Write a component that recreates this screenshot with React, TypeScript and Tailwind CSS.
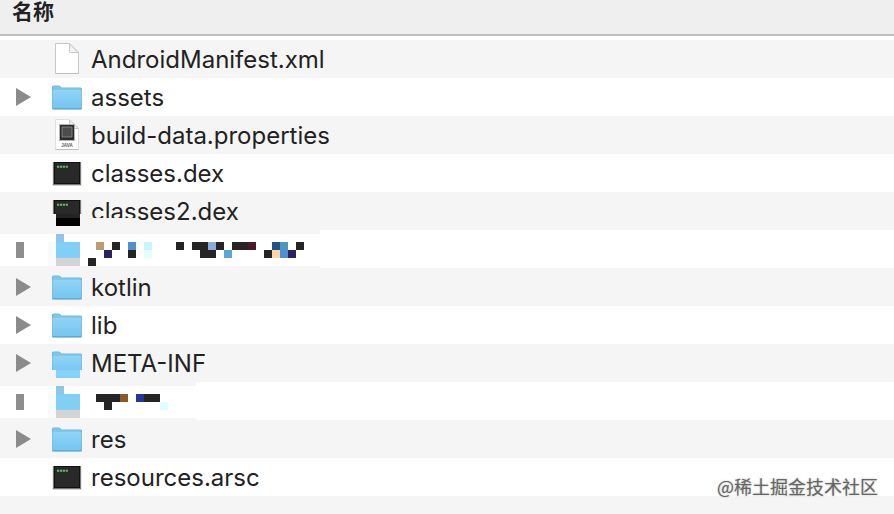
import React from 'react';

type Kind = 'file' | 'folder' | 'java' | 'exec' | 'execCut' | 'folderCut' | 'hidden';

type Entry = { name: string; kind: Kind; cells?: [number, number, number, string][]; patch?: number };

// cells are x, y, width, color on the 8px mosaic grid
const entries: Entry[] = [
  { name: 'AndroidManifest.xml', kind: 'file' },
  { name: 'assets', kind: 'folder' },
  { name: 'build-data.properties', kind: 'java' },
  { name: 'classes.dex', kind: 'exec' },
  { name: 'classes2.dex', kind: 'execCut' },
  {
    name: 'hidden-1',
    kind: 'hidden',
    patch: 320,
    cells: [
      [96, 12, 8, '#bd9c72'], [112, 12, 8, '#252525'], [128, 12, 8, '#4c90d6'], [144, 12, 8, '#c6f4ff'],
      [176, 12, 8, '#252525'], [192, 12, 16, '#252525'], [208, 12, 8, '#8aaddb'], [216, 12, 8, '#252525'],
      [232, 12, 16, '#252525'], [248, 12, 8, '#4b1b2b'], [272, 12, 8, '#235289'], [280, 12, 8, '#4d95bd'],
      [296, 12, 8, '#252525'], [104, 20, 8, '#292461'], [128, 20, 8, '#252525'], [144, 20, 8, '#e4fdff'],
      [200, 20, 16, '#252525'], [224, 20, 8, '#5aa5da'], [264, 20, 8, '#252525'], [272, 20, 8, '#fbd6a2'],
      [280, 20, 8, '#4c90d6'], [288, 20, 8, '#292461'], [88, 28, 8, '#252525'],
    ],
  },
  { name: 'kotlin', kind: 'folder' },
  { name: 'lib', kind: 'folder' },
  { name: 'META-INF', kind: 'folderCut' },
  {
    name: 'hidden-2',
    kind: 'hidden',
    patch: 196,
    cells: [
      [96, 12, 24, '#252525'], [120, 12, 8, '#8c5a28'], [136, 12, 8, '#22379a'], [144, 12, 16, '#252525'],
      [104, 20, 8, '#252525'], [160, 20, 8, '#dcffff'],
    ],
  },
  { name: 'res', kind: 'folder' },
  { name: 'resources.arsc', kind: 'exec' },
];

const FolderIcon = ({ cut }: { cut?: boolean }) => (
  <svg className="block h-[38px] w-9" viewBox="0 0 36 38">
    <defs>
      <linearGradient id="folder" x1="0" y1="0" x2="0" y2="1">
        <stop offset="0" stopColor="#8fd3f6" />
        <stop offset="1" stopColor="#76c5f0" />
      </linearGradient>
    </defs>
    <path d="M4 30V9q0-1.500 1.500-1.500h5q1 0 1.700.8l1.300 1.200h19q1.500 0 1.500 1.500V30q0 1.500-1.500 1.500h-27Q4 31.500 4 30z" fill="#6fb4dc" />
    <path d="M5 12V9q0-.8.8-.8h4.500q.8 0 1.300.6l1.300 1.500H32q1 0 1 1V12z" fill="#7fc6ec" />
    <path d="M4.500 12.500h29V29q0 1.300-1.300 1.300H5.800q-1.300 0-1.300-1.300z" fill="url(#folder)" />
    <path d="M5 12.500h28" stroke="#93d3f4" />
    <path d="M4.500 30.800h29" stroke="#5fa3ca" />
    {cut && (
      <>
        <path d="M0 26h36v8H0z" fill="#f2f4f5" />
        <path d="M8 26h24v8H8z" fill="#84d2fb" />
      </>
    )}
  </svg>
);

const PageIcon = ({ java }: { java?: boolean }) => (
  <svg className="block h-[38px] w-9" viewBox="0 0 36 38">
    <path d="M7.500 3.500h14l9 8.500V33.500h-23z" fill="#fff" stroke={java ? '#e0e0e0' : '#c8c8c8'} />
    <path d="M21.500 4v8.500h8.500z" fill="#f4f4f4" stroke="#cacaca" />
    <path d="M7.500 33.500h23" stroke="#bdbdbd" />
    {java && (
      <>
        <path d="M11 8h16v17H11z" fill="#b5b5b5" />
        <path d="M12 9h14v15H12z" fill="#2c2c2c" />
        <path d="M14 11h10v10H14z" fill="#4d4d4d" stroke="#999" strokeWidth=".7" />
        <text x="19" y="31" textAnchor="middle" fontSize="4.500" fontWeight="700" fontFamily="Liberation Sans, sans-serif" fill="#555">
          JAVA
        </text>
      </>
    )}
  </svg>
);

const ExecIcon = ({ cut }: { cut?: boolean }) => (
  <svg className="block h-[38px] w-9" viewBox="0 0 36 38">
    <path d="M4.500 8h29v24h-29z" fill="#d2d2d2" />
    <path d="M5 8h28v23H5z" fill="#777" />
    <path d="M6 8h26v22H6z" fill="#111" />
    <path d="M7 9h24v20H7z" fill="#292929" />
    <path d="M9 12.800h11" stroke="#63b95c" strokeWidth="2" strokeDasharray="2.200 .7" />
    {cut && (
      <>
        <path d="M0 22h36v16H0z" fill="#f5f5f5" />
        <path d="M8 22h24v4H8z" fill="#242424" />
        <path d="M8 26h24v8H8z" fill="#000" />
      </>
    )}
  </svg>
);

const Icon = ({ kind }: { kind: Kind }) => {
  if (kind === 'file') return <PageIcon />;
  if (kind === 'java') return <PageIcon java />;
  if (kind === 'exec') return <ExecIcon />;
  if (kind === 'execCut') return <ExecIcon cut />;
  return <FolderIcon cut={kind === 'folderCut'} />;
};

const Mosaic = ({ cells = [], patch = 0 }: { cells?: Entry['cells']; patch?: number }) => (
  <svg className="block h-[38px] w-[324px]" viewBox="0 0 324 38" shapeRendering="crispEdges">
    <path d={`M0 0h${patch}v4H0zM0 36h${patch}v2H0z`} fill="#f5f5f5" />
    <path d="M16 12h8v16h-8z" fill="#8e8e8e" />
    <path d="M48 12h8v24h-8z" fill="#f9fafb" />
    <path d="M56 4h8v8h-8z" fill="#8fc5e8" />
    <path d="M56 12h24v16H56z" fill="#82cff5" />
    <path d="M56 28h24v8H56z" fill="#d4d4d4" />
    {cells.map(([x, y, w, color]) => (
      <rect key={`${x}-${y}`} x={x} y={y} width={w} height="8" fill={color} />
    ))}
  </svg>
);

const Row = ({ entry }: { entry: Entry }) => {
  const { name, kind, cells, patch } = entry;
  const isFolder = kind === 'folder' || kind === 'folderCut';

  return (
    <tr className="odd:bg-[#f5f5f5] even:bg-white">
      <td className="p-0">
        {kind === 'hidden' ? (
          <Mosaic cells={cells} patch={patch} />
        ) : (
          <div className="flex h-[38px] items-center pl-4">
            <div className="w-8 shrink-0">
              {isFolder && (
                <button type="button" aria-label={name} className="block">
                  <svg className="block h-[18px] w-[15px]" viewBox="0 0 15 18">
                    <path d="M0 0l15 9-15 9z" fill="#8b8b8b" />
                  </svg>
                </button>
              )}
            </div>
            <Icon kind={kind} />
            <span className="relative pt-0.5 pl-[7px] text-[24px] leading-8 whitespace-nowrap">
              {name}
              {kind === 'execCut' && (
                <span className="absolute bottom-0 left-1 h-2.5 w-12 border-t border-[#f3efdc] bg-[#f5f5f5]" />
              )}
            </span>
          </div>
        )}
      </td>
    </tr>
  );
};

const App: React.FC = () => {
  return (
    <div className="relative flex h-screen flex-col overflow-hidden bg-white font-['Inter','Noto_Sans_CJK_SC',sans-serif] text-[#222]">
      <table className="w-full border-separate border-spacing-0">
        <thead>
          <tr className="bg-[#efefef]">
            <th className="h-9 border-b-2 border-[#bfbfbf] px-3 pt-0 pb-2.5 text-left text-[21px] leading-6 font-bold">
              名称
            </th>
          </tr>
        </thead>
        <tbody aria-hidden="true">
          <tr>
            <td className="h-1 p-0"></td>
          </tr>
        </tbody>
        <tbody>
          {entries.map((entry) => (
            <Row key={entry.name} entry={entry} />
          ))}
        </tbody>
      </table>
      <div className="flex-1 bg-[#f5f5f5]"></div>
      <p className="absolute right-4 bottom-3.5 font-['Noto_Sans_CJK_SC',sans-serif] text-[18px] leading-7 text-[#666] [text-shadow:0_0_2px_#aaa]">
        @稀土掘金技术社区
      </p>
    </div>
  );
};

export default App;
